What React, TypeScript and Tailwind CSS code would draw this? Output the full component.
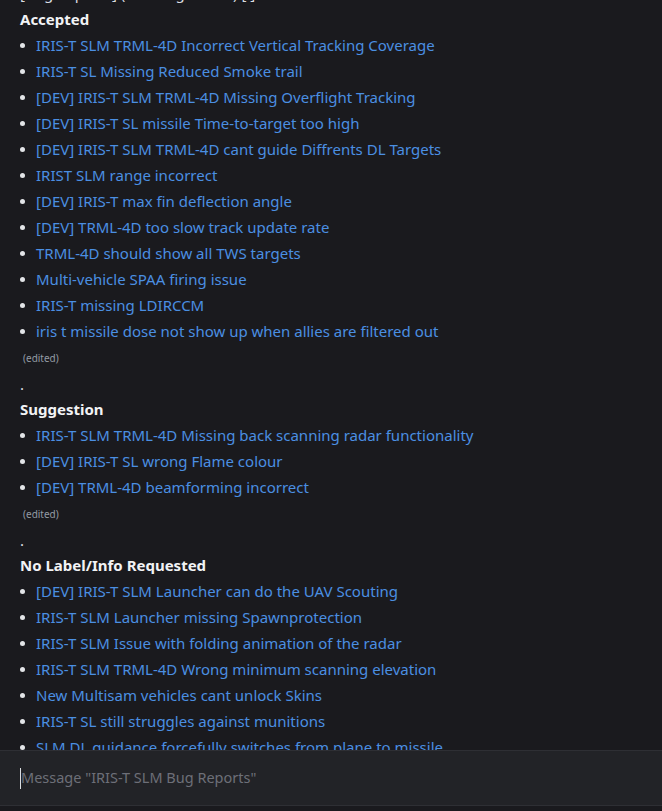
import React from "react";

const accepted = [
  "IRIS-T SLM TRML-4D Incorrect Vertical Tracking Coverage",
  "IRIS-T SL Missing Reduced Smoke trail",
  "[DEV] IRIS-T SLM TRML-4D Missing Overflight Tracking",
  "[DEV] IRIS-T SL missile Time-to-target too high",
  "[DEV] IRIS-T SLM TRML-4D cant guide Diffrents DL Targets",
  "IRIST SLM range incorrect",
  "[DEV] IRIS-T max fin deflection angle",
  "[DEV] TRML-4D too slow track update rate",
  "TRML-4D should show all TWS targets",
  "Multi-vehicle SPAA firing issue",
  "IRIS-T missing LDIRCCM",
  "iris t missile dose not show up when allies are filtered out",
];

const suggestion = [
  "IRIS-T SLM TRML-4D Missing back scanning radar functionality",
  "[DEV] IRIS-T SL wrong Flame colour",
  "[DEV] TRML-4D beamforming incorrect",
];

const noLabel = [
  "[DEV] IRIS-T SLM Launcher can do the UAV Scouting",
  "IRIS-T SLM Launcher missing Spawnprotection",
  "IRIS-T SLM Issue with folding animation of the radar",
  "IRIS-T SLM TRML-4D Wrong minimum scanning elevation",
  "New Multisam vehicles cant unlock Skins",
  "IRIS-T SL still struggles against munitions",
  "SLM DL guidance forcefully switches from plane to missile",
];

const LinkList = ({ items }: { items: string[] }) => (
  <ul className="flex flex-col">
    {items.map((t) => (
      <li key={t} className="flex h-[26px] items-center">
        <span className="w-[16px] flex items-center">
          <span className="w-[5px] h-[5px] rounded-full bg-[#e3e5e8]" />
        </span>
        <a className="text-[#4b8fe2] hover:underline cursor-pointer">{t}</a>
      </li>
    ))}
  </ul>
);

const Edited = () => (
  <>
    <div className="h-[28px] flex items-center pl-[3px] text-[10px] text-[#949ba4]">(edited)</div>
    <div className="h-[24px] flex items-center text-[#dbdee1]">.</div>
  </>
);

const Heading = ({ children }: { children: React.ReactNode }) => (
  <div className="h-[26px] flex items-center font-bold text-[#f2f3f5]">{children}</div>
);

export default function App() {
  return (
    <div
      className="w-[662px] h-[811px] flex flex-col bg-[#1a1a1e] overflow-hidden text-[15px]"
      style={{ fontFamily: '"Noto Sans", "Open Sans", sans-serif' }}
    >
      {/* Message content */}
      <div className="flex-1 min-h-0 overflow-hidden px-[20px]">
        <div className="-mt-[20px] h-[26px] flex items-center text-[#dbdee1]">
          [Bug Reports] (Tracking Issues) [ ]
        </div>
        <Heading>Accepted</Heading>
        <LinkList items={accepted} />
        <Edited />
        <Heading>Suggestion</Heading>
        <LinkList items={suggestion} />
        <Edited />
        <Heading>No Label/Info Requested</Heading>
        <LinkList items={noLabel} />
      </div>

      {/* Message input */}
      <div className="h-[56px] shrink-0 border-y border-[#2e2f34] bg-[#222327] flex items-center px-[20px]">
        <span className="w-[1px] h-[21px] bg-[#dbdee1]" />
        <span className="text-[14.5px] text-[#6d6f78]">Message "IRIS-T SLM Bug Reports"</span>
      </div>
      <div className="h-[5px] shrink-0 bg-[#1a1a1e]" />
    </div>
  );
}
